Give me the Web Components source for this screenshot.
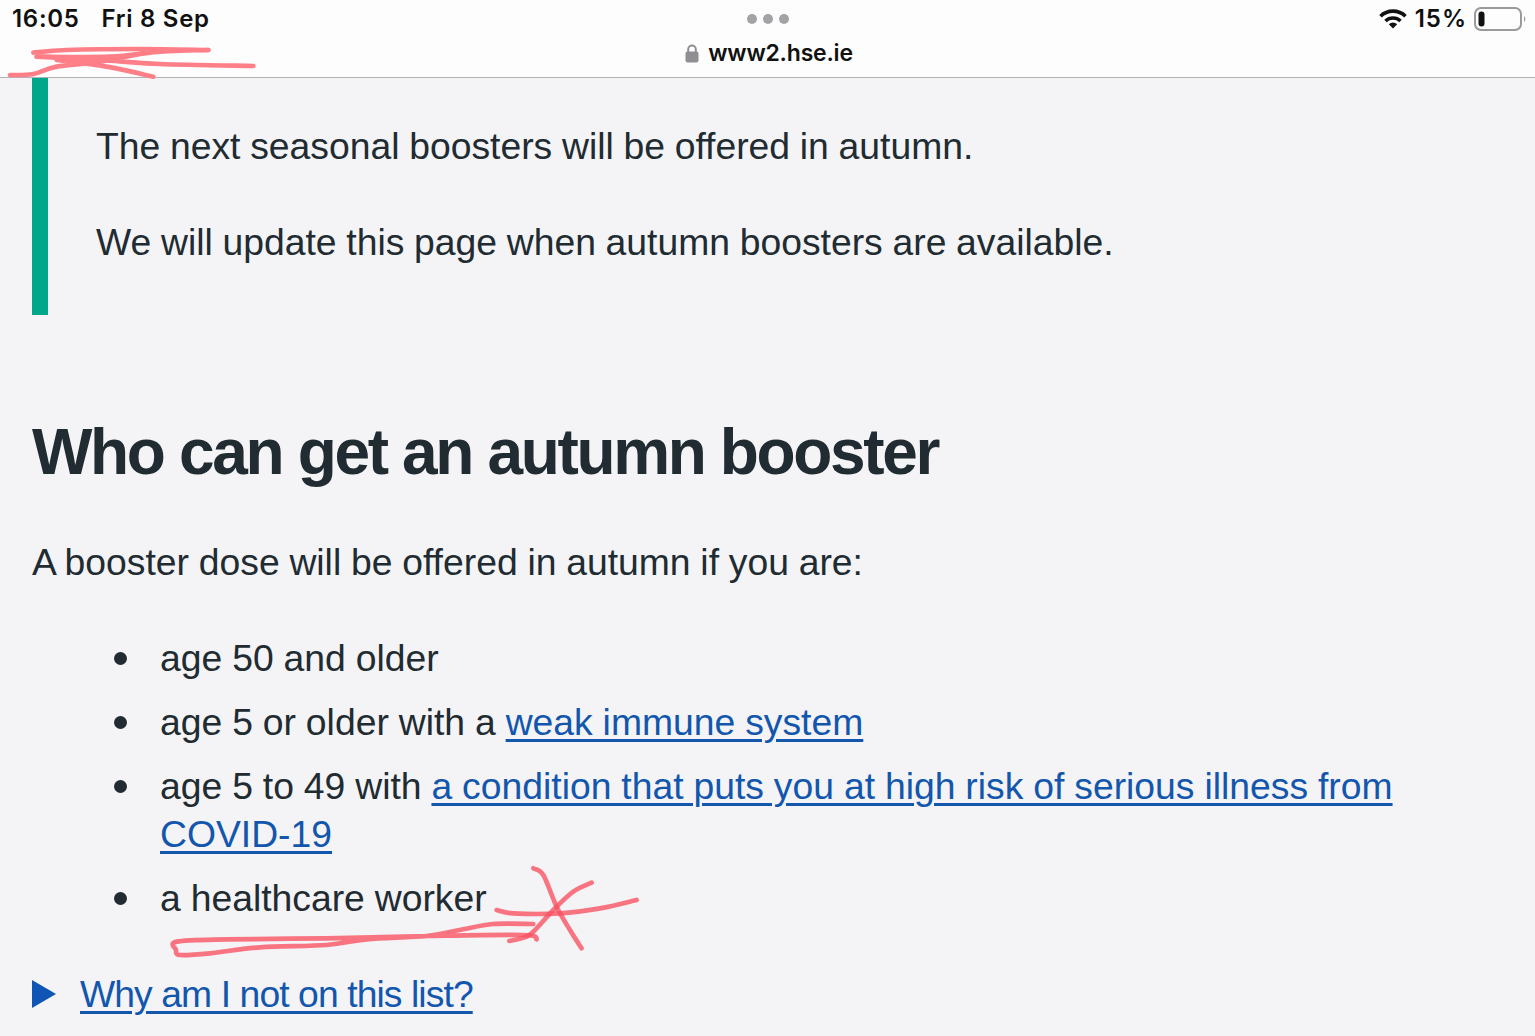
<!DOCTYPE html>
<html lang="en"><head><meta charset="utf-8"><title>Who can get an autumn booster</title>
<style>
html,body{margin:0;padding:0;background:#f4f3f5}
body{width:1535px;height:1036px;overflow:hidden;position:relative;font-family:"Liberation Sans",Arial,sans-serif;color:#212b32}
</style></head><body>
<status-bar time="16:05" date="Fri 8 Sep" url="www2.hse.ie" battery="15%"></status-bar>
<page-content>
  <inset-text>
    <p>The next seasonal boosters will be offered in autumn.</p>
    <p>We will update this page when autumn boosters are available.</p>
  </inset-text>
  <h-two>Who can get an autumn booster</h-two>
  <body-text>A booster dose will be offered in autumn if you are:</body-text>
  <bullet-list>
    <bullet-item>age 50 and older</bullet-item>
    <bullet-item>age 5 or older with a <a href="#">weak immune system</a></bullet-item>
    <bullet-item>age 5 to 49 with <a href="#">a condition that puts you at high risk of serious illness from COVID-19</a></bullet-item>
    <bullet-item>a healthcare worker</bullet-item>
  </bullet-list>
  <details-link>Why am I not on this list?</details-link>
</page-content>
<scribble-layer></scribble-layer>
<script>
const def=(n,html)=>customElements.define(n,class extends HTMLElement{constructor(){super();this.attachShadow({mode:'open'}).innerHTML=html}});
customElements.define('status-bar',class extends HTMLElement{constructor(){super();this.attachShadow({mode:'open'})}
connectedCallback(){const a=k=>this.getAttribute(k);this.shadowRoot.innerHTML=`<style>
:host{display:grid;grid-template-columns:1fr auto 1fr;box-sizing:border-box;background:#fdfdfd;border-bottom:1px solid #b3b3b5;height:78px;color:#111;font:600 24px Inter,"Liberation Sans",sans-serif}
.l{padding:7px 0 0 12px;display:flex;gap:22px;line-height:24px;align-self:start;letter-spacing:.7px}
.c{display:flex;flex-direction:column;align-items:center}
.dots{display:flex;gap:6px;margin-top:14px;height:10px}
.dots i{width:10px;height:10px;border-radius:50%;background:#a3a3a5}
.url{display:flex;align-items:center;gap:9px;margin-top:16px;line-height:26px;font-size:23px;margin-left:3px;letter-spacing:-.2px}
.r{display:flex;justify-content:flex-end;align-items:flex-start;padding-top:7px;line-height:24px}
.r .pct{margin-left:8px;letter-spacing:1px}
svg{display:block}
</style>
<div class="l"><span>${a('time')}</span><span>${a('date')}</span></div>
<div class="c"><div class="dots"><i></i><i></i><i></i></div>
<div class="url"><svg width="14" height="19" viewBox="0 0 14 19"><path d="M3.2 8V5.4a3.8 3.8 0 0 1 7.6 0V8" fill="none" stroke="#8e8e93" stroke-width="2"/><rect x="0.5" y="7.5" width="13" height="11" rx="2" fill="#8e8e93"/></svg><span>${a('url')}</span></div></div>
<div class="r"><svg width="28" height="20" viewBox="0 0 28 20" style="margin-top:2px"><path d="M1.5 7.2A18 18 0 0 1 26.5 7.2" fill="none" stroke="#111" stroke-width="3.6"/><path d="M6.5 12A11 11 0 0 1 21.5 12" fill="none" stroke="#111" stroke-width="3.6"/><path d="M14 19.5 9.8 15.3A6 6 0 0 1 18.200 15.300Z" fill="#111"/></svg><span class="pct">${a('battery')}</span>
<svg width="54" height="24" viewBox="0 0 54 24" style="margin:0 7px 0 7px"><rect x="1" y="1" width="46" height="22" rx="6" fill="none" stroke="#9a9a9c" stroke-width="2"/><rect x="4.5" y="4.5" width="6" height="15" rx="3" fill="#111"/><path d="M50 9a4 4 0 0 1 0 6z" fill="#9a9a9c"/></svg></div>`}});
def('page-content',`<style>:host{display:block;padding:0 0 0 32px}</style><slot></slot>`);
def('inset-text',`<style>:host{display:block;border-left:16px solid #00a78a;padding:44px 0 49px 48px;font-size:37.3px;line-height:48px;word-spacing:-.65px}
::slotted(p){margin:0 0 48px}::slotted(p:last-child){margin:0}</style><slot></slot>`);
def('h-two',`<style>:host{display:block;font-weight:700;font-size:64px;line-height:80px;letter-spacing:-2.35px;margin-top:97px}</style><slot></slot>`);
def('body-text',`<style>:host{display:block;font-size:37.3px;line-height:48px;margin-top:46px;word-spacing:-.6px}</style><slot></slot>`);
def('bullet-list',`<style>:host{display:flex;flex-direction:column;gap:16px;margin:48px 0;padding:0 128px}</style><slot></slot>`);
def('bullet-item',`<style>:host{display:block;position:relative;font-size:37.3px;line-height:48px;word-spacing:-.45px}
.d{position:absolute;left:-46px;top:18px;width:13px;height:13px;border-radius:50%;background:#212b32}
::slotted(a){color:#1257ad;text-decoration-thickness:3px;text-underline-offset:4px}</style><span class="d"></span><slot></slot>`);
def('details-link',`<style>:host{display:flex;align-items:center;gap:24px;font-size:37.3px;line-height:48px}
svg{display:block;flex:none}a{color:#1257ad;text-decoration:underline;text-decoration-thickness:3px;text-underline-offset:4px;letter-spacing:-.92px}</style>
<svg width="24" height="28" viewBox="0 0 24 28"><path d="M0 0 24 14 0 28Z" fill="#0f55b5"/></svg><a href="#"><slot></slot></a>`);
const smooth=p=>{let d=`M${p[0]} ${p[1]}`;const n=p.length/2,g=i=>{i=Math.max(0,Math.min(n-1,i));return[p[2*i],p[2*i+1]]};
for(let i=0;i<n-1;i++){const[a,b,c,e]=[g(i-1),g(i),g(i+1),g(i+2)];d+=`C${b[0]+(c[0]-a[0])/6} ${b[1]+(c[1]-a[1])/6} ${c[0]-(e[0]-b[0])/6} ${c[1]-(e[1]-b[1])/6} ${c[0]} ${c[1]}`}return d};
const upper=[[100,158,200,150,420,147,625,150],[625,150,480,155,330,170,110,170],[110,170,300,180,480,192,760,198],[30,225,100,222,170,200,300,185,450,155],[170,180,320,200,460,230]];
const lower=[[1130,268,1090,255,800,258,500,265,200,268,50,275,48,300,60,315,150,310,300,292,500,285,620,268,800,258,900,240,1000,222,1120,222],[1010,180,1060,190,1200,190,1320,175,1430,150],[1120,55,1150,75,1190,170,1230,240,1265,295],[1295,98,1240,125,1180,180,1130,235,1100,260,1048,273]];
def('scribble-layer',`<style>:host{position:absolute;inset:0;pointer-events:none}svg{position:absolute;left:0;top:0}path{fill:none;stroke-linecap:round;stroke-linejoin:round}</style>
<svg width="1535" height="1036" viewBox="0 0 1535 1036">
<g transform="scale(.3333)" stroke="#ff7f88" stroke-width="14">${upper.map(p=>`<path d="${smooth(p)}"/>`).join('')}</g>
<g transform="translate(160 850) scale(.3333)" stroke="#f7505f" stroke-opacity=".78" stroke-width="14">${lower.map(p=>`<path d="${smooth(p)}"/>`).join('')}</g></svg>`);
</script>
</body></html>
